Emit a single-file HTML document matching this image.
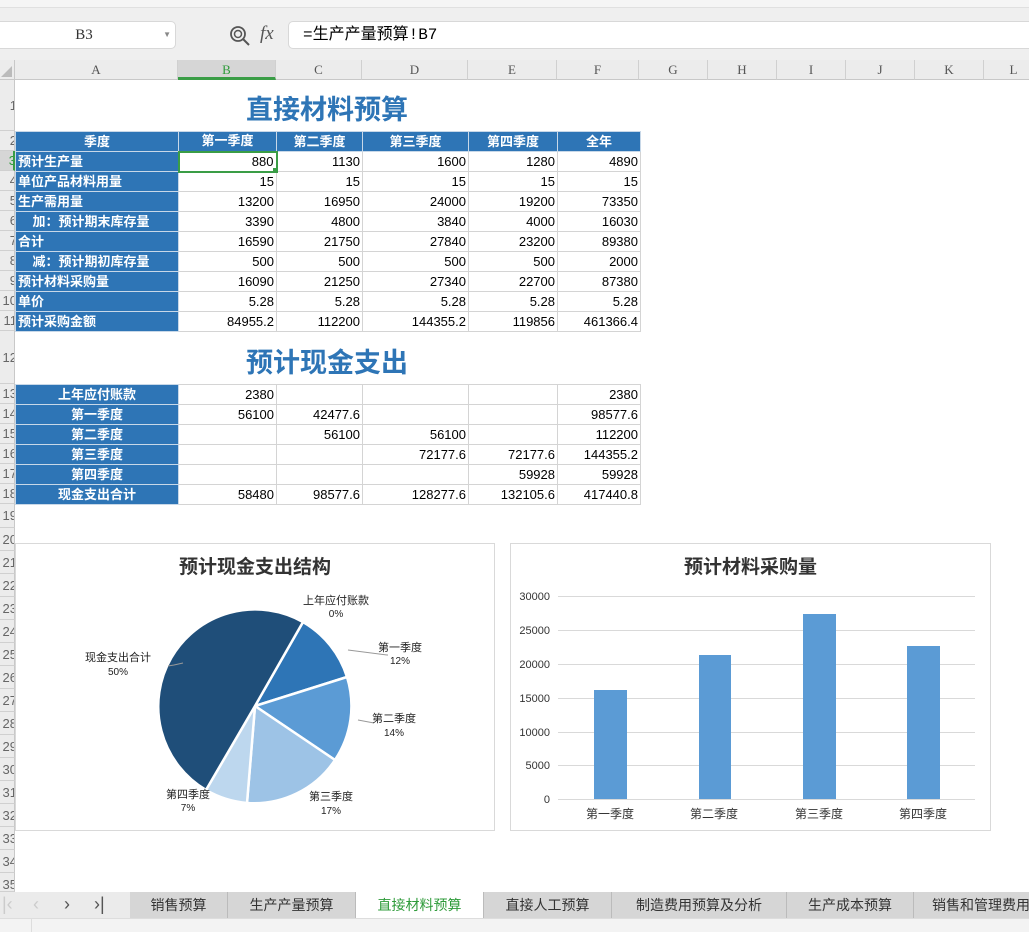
<!DOCTYPE html>
<html><head><meta charset="utf-8"><style>
*{margin:0;padding:0;box-sizing:border-box}
body{width:1029px;height:932px;overflow:hidden;background:#fff;position:relative;font-family:"Liberation Sans","Noto Sans CJK SC",sans-serif;font-size:13px;color:#000}
.abs{position:absolute}
table{border-collapse:collapse;table-layout:fixed;position:absolute}
td{border:1px solid #d4d4d4;height:20px;padding:0 2px;text-align:right;white-space:nowrap;overflow:hidden;font-size:13px;line-height:18px}
td.h{background:#2e75b6;color:#fff;font-weight:bold;text-align:center;border-color:#c8d8e8}
td.l{background:#2e75b6;color:#fff;font-weight:bold;text-align:left;border-color:#c8d8e8}
.ch{position:absolute;top:60px;height:20px;border-right:1px solid #d0d0d0;text-align:center;color:#555;font-family:"Liberation Serif",serif;font-size:13px;line-height:20px;background:#ececec;border-bottom:1px solid #c8c8c8}
.rh{position:absolute;left:0;width:15px;border-bottom:1px solid #d0d0d0;background:#ececec;color:#666;font-size:13px;overflow:hidden;border-right:1px solid #c8c8c8}
.rh span{position:absolute;right:-3px;top:0}
.title{position:absolute;font-weight:bold;color:#2e75b6;font-size:27px;text-align:center}
.tab{position:absolute;top:892px;height:26px;line-height:26px;font-size:14px;color:#333;text-align:center;border-right:1px solid #bbb;background:#d6d6d6}
</style></head><body>
<div class="abs" style="left:0;top:0;width:1029px;height:8px;background:#f5f5f5;border-bottom:1px solid #e0e0e0"></div>
<div class="abs" style="left:0;top:8px;width:1029px;height:52px;background:#efefef"></div>
<div class="abs" style="left:-8px;top:21px;width:184px;height:28px;background:#fff;border:1px solid #d8d8d8;border-radius:5px;font-family:'Liberation Serif',serif;font-size:15px;line-height:26px;text-align:center;color:#333">B3<span style="position:absolute;right:4px;top:0;font-size:8px;color:#888">▼</span></div>
<svg class="abs" style="left:228px;top:24px" width="24" height="24" viewBox="0 0 24 24"><circle cx="10" cy="10" r="7" fill="none" stroke="#555" stroke-width="1.8"/><circle cx="10" cy="10" r="3.5" fill="none" stroke="#555" stroke-width="1.5"/><line x1="15" y1="15" x2="21" y2="21" stroke="#555" stroke-width="2"/></svg>
<div class="abs" style="left:260px;top:23px;font-family:'Liberation Serif',serif;font-style:italic;font-size:19px;color:#555">fx</div>
<div class="abs" style="left:288px;top:21px;width:760px;height:28px;background:#fff;border:1px solid #d8d8d8;border-radius:5px;font-size:16px;line-height:26px;padding-left:14px;font-family:'Liberation Mono','Noto Sans CJK SC',monospace">=生产产量预算!B7</div>

<div class="abs" style="left:0;top:60px;width:15px;height:20px;background:#ececec;border-right:1px solid #c8c8c8;border-bottom:1px solid #c8c8c8"></div>
<svg class="abs" style="left:1px;top:66px" width="12" height="12"><polygon points="11,0 11,11 0,11" fill="#bbb"/></svg>
<div class="ch" style="left:15px;width:163px">A</div>
<div class="ch" style="left:178px;width:98px;background:#d6d6d6;color:#2e9b3a;border-bottom:3px solid #3a9d46">B</div>
<div class="ch" style="left:276px;width:86px">C</div>
<div class="ch" style="left:362px;width:106px">D</div>
<div class="ch" style="left:468px;width:89px">E</div>
<div class="ch" style="left:557px;width:82px">F</div>
<div class="ch" style="left:639px;width:69px">G</div>
<div class="ch" style="left:708px;width:69px">H</div>
<div class="ch" style="left:777px;width:69px">I</div>
<div class="ch" style="left:846px;width:69px">J</div>
<div class="ch" style="left:915px;width:69px">K</div>
<div class="ch" style="left:984px;width:60px">L</div>

<div class="rh" style="top:80px;height:51px;line-height:51px"><span>1</span></div>
<div class="rh" style="top:131px;height:20px;line-height:20px"><span>2</span></div>
<div class="rh" style="top:151px;height:20px;line-height:20px;color:#2e9b3a;border-right:2px solid #3a9d46;background:#d6d6d6"><span>3</span></div>
<div class="rh" style="top:171px;height:20px;line-height:20px"><span>4</span></div>
<div class="rh" style="top:191px;height:20px;line-height:20px"><span>5</span></div>
<div class="rh" style="top:211px;height:20px;line-height:20px"><span>6</span></div>
<div class="rh" style="top:231px;height:20px;line-height:20px"><span>7</span></div>
<div class="rh" style="top:251px;height:20px;line-height:20px"><span>8</span></div>
<div class="rh" style="top:271px;height:20px;line-height:20px"><span>9</span></div>
<div class="rh" style="top:291px;height:20px;line-height:20px"><span>10</span></div>
<div class="rh" style="top:311px;height:20px;line-height:20px"><span>11</span></div>
<div class="rh" style="top:331px;height:53px;line-height:53px"><span>12</span></div>
<div class="rh" style="top:384px;height:20px;line-height:20px"><span>13</span></div>
<div class="rh" style="top:404px;height:20px;line-height:20px"><span>14</span></div>
<div class="rh" style="top:424px;height:20px;line-height:20px"><span>15</span></div>
<div class="rh" style="top:444px;height:20px;line-height:20px"><span>16</span></div>
<div class="rh" style="top:464px;height:20px;line-height:20px"><span>17</span></div>
<div class="rh" style="top:484px;height:20px;line-height:20px"><span>18</span></div>
<div class="rh" style="top:504px;height:24px;line-height:24px"><span>19</span></div>
<div class="rh" style="top:528px;height:23px;line-height:23px"><span>20</span></div>
<div class="rh" style="top:551px;height:23px;line-height:23px"><span>21</span></div>
<div class="rh" style="top:574px;height:23px;line-height:23px"><span>22</span></div>
<div class="rh" style="top:597px;height:23px;line-height:23px"><span>23</span></div>
<div class="rh" style="top:620px;height:23px;line-height:23px"><span>24</span></div>
<div class="rh" style="top:643px;height:23px;line-height:23px"><span>25</span></div>
<div class="rh" style="top:666px;height:23px;line-height:23px"><span>26</span></div>
<div class="rh" style="top:689px;height:23px;line-height:23px"><span>27</span></div>
<div class="rh" style="top:712px;height:23px;line-height:23px"><span>28</span></div>
<div class="rh" style="top:735px;height:23px;line-height:23px"><span>29</span></div>
<div class="rh" style="top:758px;height:23px;line-height:23px"><span>30</span></div>
<div class="rh" style="top:781px;height:23px;line-height:23px"><span>31</span></div>
<div class="rh" style="top:804px;height:23px;line-height:23px"><span>32</span></div>
<div class="rh" style="top:827px;height:23px;line-height:23px"><span>33</span></div>
<div class="rh" style="top:850px;height:23px;line-height:23px"><span>34</span></div>
<div class="rh" style="top:873px;height:19px;line-height:23px"><span>35</span></div>

<div class="title" style="left:15px;width:624px;top:88px">直接材料预算</div>
<table style="left:15px;top:131px;width:625px">
<colgroup><col style="width:163px"><col style="width:98px"><col style="width:86px"><col style="width:106px"><col style="width:89px"><col style="width:83px"></colgroup>
<tr><td class="h">季度</td><td class="h">第一季度</td><td class="h">第二季度</td><td class="h">第三季度</td><td class="h">第四季度</td><td class="h">全年</td></tr>
<tr><td class="l">预计生产量</td><td style="border:2px solid #3a9d46">880</td><td>1130</td><td>1600</td><td>1280</td><td>4890</td></tr>
<tr><td class="l">单位产品材料用量</td><td>15</td><td>15</td><td>15</td><td>15</td><td>15</td></tr>
<tr><td class="l">生产需用量</td><td>13200</td><td>16950</td><td>24000</td><td>19200</td><td>73350</td></tr>
<tr><td class="l">&nbsp;&nbsp;&nbsp;&nbsp;加：预计期末库存量</td><td>3390</td><td>4800</td><td>3840</td><td>4000</td><td>16030</td></tr>
<tr><td class="l">合计</td><td>16590</td><td>21750</td><td>27840</td><td>23200</td><td>89380</td></tr>
<tr><td class="l">&nbsp;&nbsp;&nbsp;&nbsp;减：预计期初库存量</td><td>500</td><td>500</td><td>500</td><td>500</td><td>2000</td></tr>
<tr><td class="l">预计材料采购量</td><td>16090</td><td>21250</td><td>27340</td><td>22700</td><td>87380</td></tr>
<tr><td class="l">单价</td><td>5.28</td><td>5.28</td><td>5.28</td><td>5.28</td><td>5.28</td></tr>
<tr><td class="l">预计采购金额</td><td>84955.2</td><td>112200</td><td>144355.2</td><td>119856</td><td>461366.4</td></tr>
</table>
<div class="abs" style="left:273px;top:168px;width:5px;height:5px;background:#3a9d46"></div>

<div class="title" style="left:15px;width:624px;top:341px">预计现金支出</div>
<table style="left:15px;top:384px;width:625px">
<colgroup><col style="width:163px"><col style="width:98px"><col style="width:86px"><col style="width:106px"><col style="width:89px"><col style="width:83px"></colgroup>
<tr><td class="h">上年应付账款</td><td>2380</td><td></td><td></td><td></td><td>2380</td></tr>
<tr><td class="h">第一季度</td><td>56100</td><td>42477.6</td><td></td><td></td><td>98577.6</td></tr>
<tr><td class="h">第二季度</td><td></td><td>56100</td><td>56100</td><td></td><td>112200</td></tr>
<tr><td class="h">第三季度</td><td></td><td></td><td>72177.6</td><td>72177.6</td><td>144355.2</td></tr>
<tr><td class="h">第四季度</td><td></td><td></td><td></td><td>59928</td><td>59928</td></tr>
<tr><td class="h">现金支出合计</td><td>58480</td><td>98577.6</td><td>128277.6</td><td>132105.6</td><td>417440.8</td></tr>
</table>

<div class="abs" style="left:15px;top:543px;width:480px;height:288px;border:1px solid #d9d9d9;background:#fff"></div>
<div class="abs" style="left:15px;top:552px;width:480px;text-align:center;font-size:19px;font-weight:bold;color:#333">预计现金支出结构</div>
<svg class="abs" style="left:15px;top:543px" width="480" height="288" viewBox="15 543 480 288" font-family="Liberation Sans,Noto Sans CJK SC,sans-serif" font-size="11" fill="#222">
<g stroke="#fff" stroke-width="2.5">
<path d="M255,706 L303,622 A97,97 0 0 1 347,677 Z" fill="#2e75b6"/>
<path d="M255,706 L347,677 A97,97 0 0 1 335,760 Z" fill="#5b9bd5"/>
<path d="M255,706 L335,760 A97,97 0 0 1 247,803 Z" fill="#9dc3e6"/>
<path d="M255,706 L247,803 A97,97 0 0 1 206,790 Z" fill="#bdd7ee"/>
<path d="M255,706 L206,790 A97,97 0 0 1 303,622 Z" fill="#1f4e79"/>
</g>
<g stroke="#999" fill="none" stroke-width="1"><path d="M348,650 L387,655 L388,655"/><path d="M374,723 L358,720"/><path d="M183,663 L174,665 L168,666"/></g>
<text x="336" y="604" text-anchor="middle">上年应付账款</text><text x="336" y="617" text-anchor="middle" font-size="10">0%</text>
<text x="400" y="651" text-anchor="middle">第一季度</text><text x="400" y="664" text-anchor="middle" font-size="10">12%</text>
<text x="394" y="722" text-anchor="middle">第二季度</text><text x="394" y="736" text-anchor="middle" font-size="10">14%</text>
<text x="331" y="800" text-anchor="middle">第三季度</text><text x="331" y="814" text-anchor="middle" font-size="10">17%</text>
<text x="188" y="798" text-anchor="middle">第四季度</text><text x="188" y="811" text-anchor="middle" font-size="10">7%</text>
<text x="118" y="661" text-anchor="middle">现金支出合计</text><text x="118" y="675" text-anchor="middle" font-size="10">50%</text>
</svg>

<div class="abs" style="left:510px;top:543px;width:481px;height:288px;border:1px solid #d9d9d9;background:#fff"></div>
<div class="abs" style="left:510px;top:552px;width:481px;text-align:center;font-size:19px;font-weight:bold;color:#333">预计材料采购量</div>
<svg class="abs" style="left:510px;top:543px" width="481" height="288" viewBox="510 543 481 288" font-family="Liberation Sans,Noto Sans CJK SC,sans-serif" font-size="11" fill="#333">
<g stroke="#d9d9d9" stroke-width="1">
<line x1="558" x2="975" y1="596.5" y2="596.5"/><line x1="558" x2="975" y1="630.5" y2="630.5"/><line x1="558" x2="975" y1="664.5" y2="664.5"/><line x1="558" x2="975" y1="698.5" y2="698.5"/><line x1="558" x2="975" y1="732.5" y2="732.5"/><line x1="558" x2="975" y1="765.5" y2="765.5"/><line x1="558" x2="975" y1="799.5" y2="799.5"/>
</g>
<g text-anchor="end"><text x="550" y="600">30000</text><text x="550" y="634">25000</text><text x="550" y="668">20000</text><text x="550" y="702">15000</text><text x="550" y="736">10000</text><text x="550" y="769">5000</text><text x="550" y="803">0</text></g>
<g fill="#5b9bd5"><rect x="594" y="690" width="33" height="109"/><rect x="699" y="655" width="32" height="144"/><rect x="803" y="614" width="33" height="185"/><rect x="907" y="646" width="33" height="153"/></g>
<g text-anchor="middle" font-size="12"><text x="610" y="818">第一季度</text><text x="714" y="818">第二季度</text><text x="819" y="818">第三季度</text><text x="923" y="818">第四季度</text></g>
</svg>

<div class="abs" style="left:0;top:892px;width:1029px;height:26px;background:#ebebeb"></div>
<div class="abs" style="left:0;top:892px;width:130px;height:26px;font-size:18px;line-height:24px;color:#555;font-family:'Liberation Sans',sans-serif"><span style="position:absolute;left:2px;color:#ccc">|‹</span><span style="position:absolute;left:33px;color:#ccc">‹</span><span style="position:absolute;left:64px">›</span><span style="position:absolute;left:94px">›|</span></div>
<div class="tab" style="left:130px;width:98px">销售预算</div>
<div class="tab" style="left:228px;width:128px">生产产量预算</div>
<div class="tab" style="left:356px;width:128px;background:#fff;color:#2e9b3a;height:27px">直接材料预算</div>
<div class="tab" style="left:484px;width:128px">直接人工预算</div>
<div class="tab" style="left:612px;width:175px">制造费用预算及分析</div>
<div class="tab" style="left:787px;width:127px">生产成本预算</div>
<div class="tab" style="left:914px;width:130px;text-align:left;padding-left:18px">销售和管理费用</div>
<div class="abs" style="left:0;top:918px;width:1029px;height:14px;background:#f3f3f3;border-top:1px solid #ddd"></div>
<div class="abs" style="left:31px;top:918px;width:1px;height:14px;background:#ddd"></div>
</body></html>
